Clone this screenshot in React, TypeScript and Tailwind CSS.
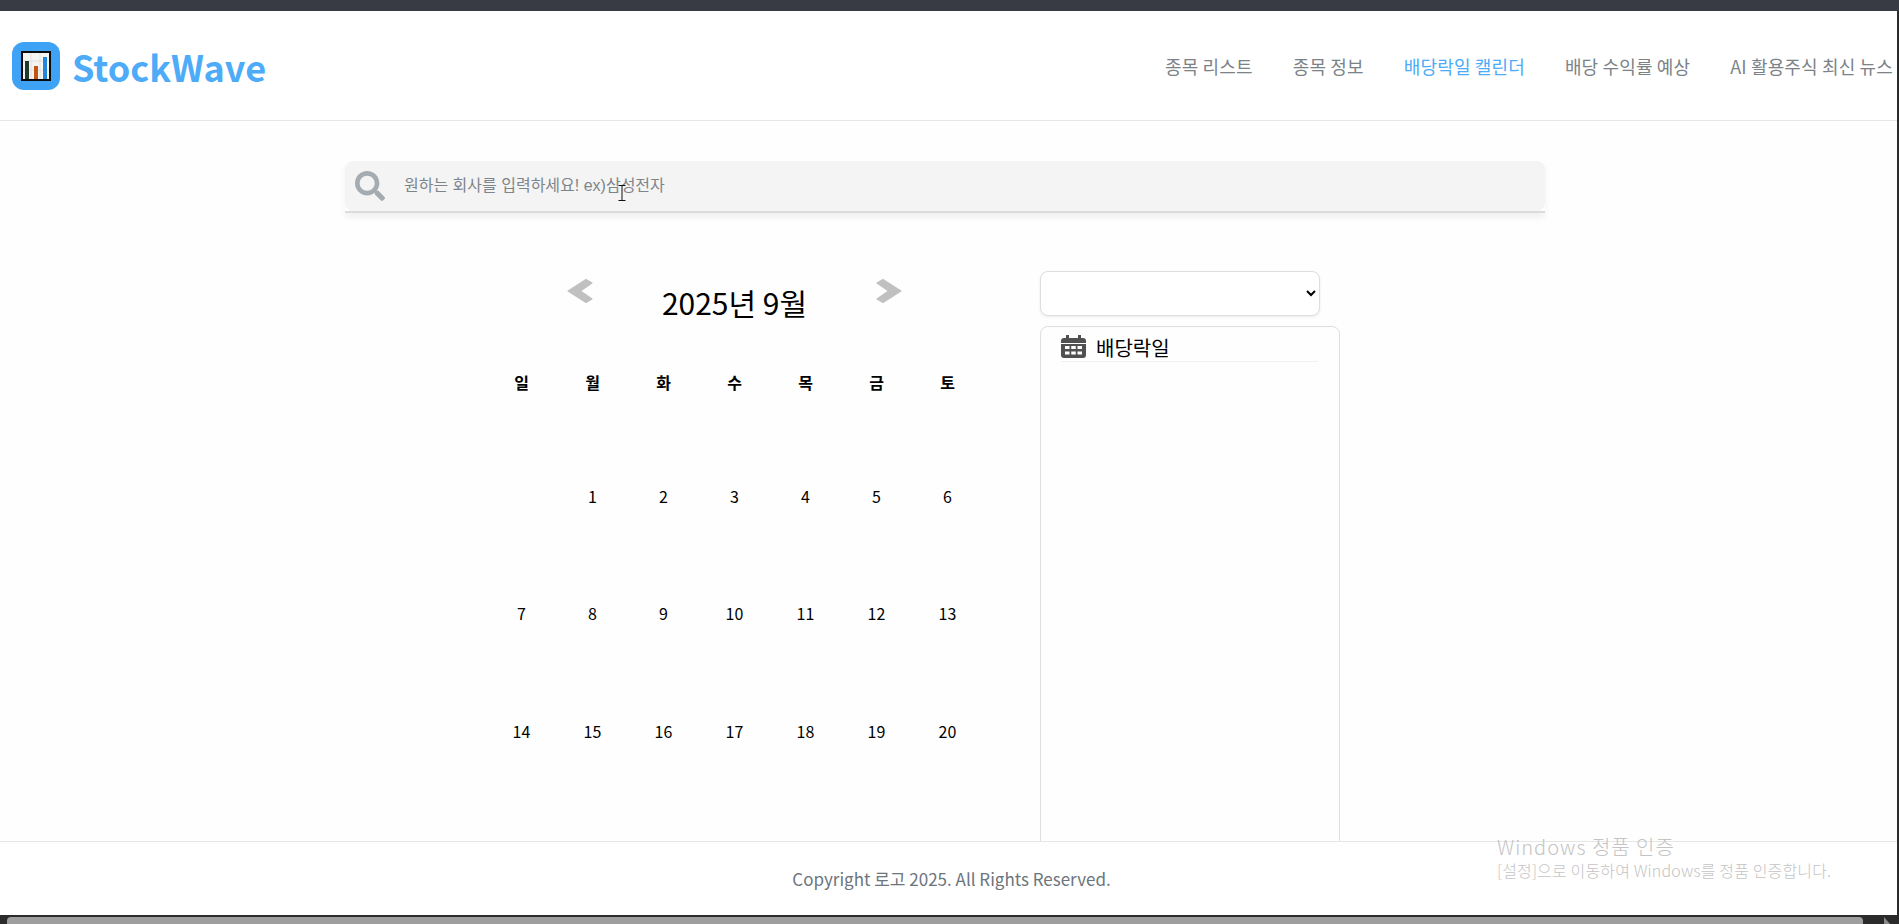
import React from 'react';
import { FaSearch } from 'react-icons/fa';

const navItems = ['종목 리스트', '종목 정보', '배당락일 캘린더', '배당 수익률 예상', 'AI 활용주식 최신 뉴스'];
const weekdays = ['일', '월', '화', '수', '목', '금', '토'];
const days: (number | null)[] = [null, ...Array.from({ length: 20 }, (_, i) => i + 1)];

function Logo() {
  return (
    <div className="w-12 h-12 rounded-xl bg-[#3fa3f5] flex items-center justify-center">
      <svg width="30" height="30" viewBox="0 0 30 30">
        <rect x="0" y="0" width="30" height="30" fill="#0b0b0b" />
        <rect x="2" y="2" width="26" height="26" fill="#f4f4f2" />
        <path d="M2 10H28M2 19H28M10 2V28M19 2V28" stroke="#e0e0e0" strokeWidth="1" />
        <rect x="4" y="10" width="4" height="18" fill="#1f3b2a" />
        <rect x="13" y="15" width="4" height="13" fill="#c2540f" />
        <rect x="22" y="6" width="4" height="22" fill="#2385dc" />
      </svg>
    </div>
  );
}

function Arrow({ flip }: { flip?: boolean }) {
  return (
    <svg width="26" height="26" viewBox="0 0 26 26" className={flip ? 'rotate-180' : ''}>
      <polygon
        points="1,13 19,1.5 25,5 13.5,13 25,21 19,24.5"
        fill="#c0c0c0"
        stroke="#c0c0c0"
        strokeWidth="1.2"
        strokeLinejoin="round"
      />
    </svg>
  );
}

function CalendarIcon() {
  return (
    <svg width="25" height="23" viewBox="0 0 25 23" className="shrink-0 -mt-[2px]">
      <path d="M5 0H8V3H17V0H20V3H22Q25 3 25 6V8H0V6Q0 3 3 3H5Z" fill="#505050" />
      <path d="M0 9H25V20Q25 23 22 23H3Q0 23 0 20Z" fill="#505050" />
      <path d="M4 11H8.5V14H4ZM10.25 11H14.75V14H10.25ZM16.5 11H21V14H16.5ZM4 16.5H8.5V19.5H4ZM10.25 16.5H14.75V19.5H10.25ZM16.5 16.5H21V19.5H16.5Z" fill="#ffffff" />
    </svg>
  );
}

export default function App() {
  return (
    <div className="h-screen flex flex-col overflow-hidden bg-white font-['Noto_Sans_CJK_KR','Noto_Sans',sans-serif] relative">
      <div className="h-[11px] shrink-0 bg-[#383a44]" />

      <div className="flex-1 min-h-0 flex">
        <div className="flex-1 min-w-0 flex flex-col bg-[#fefefe]">
          <header className="h-[110px] shrink-0 border-b border-[#e6e6e6] flex items-center justify-between pl-3 pr-1 bg-white">
            <div className="flex items-center gap-3">
              <Logo />
              <span className="text-[36px] leading-none font-semibold text-[#4dabf7]">StockWave</span>
            </div>
            <nav className="flex gap-10 text-lg tracking-[0.15px] text-[#7b8388]">
              {navItems.map((item) => (
                <a key={item} className={item === '배당락일 캘린더' ? 'text-[#4dabf7]' : ''}>
                  {item}
                </a>
              ))}
            </nav>
          </header>

          <main className="flex-1 min-h-0 overflow-hidden">
            <div className="ml-[345px] mt-10 w-[1200px] border-b-2 border-[#dcdcdc] shadow-[0_5px_6px_rgba(0,0,0,0.05)]">
              <div className="h-[50px] flex items-center gap-[19px] pl-[10px] bg-[#f4f4f4] rounded-lg">
                <FaSearch className="w-[30px] h-[30px] text-[#a5acb1]" />
                <span className="font-['Liberation_Sans','Noto_Sans_CJK_KR',sans-serif] text-base text-[#7d858b]">원하는 회사를 입력하세요! ex)삼성전자</span>
              </div>
            </div>

            <div className="flex ml-[486px] mt-[58px]">
              <section className="w-[497px] shrink-0">
                <div className="mx-auto w-[335px] pt-[7px] flex justify-between items-start">
                  <Arrow />
                  <h2 className="pt-[3px] text-[30px] leading-[42px] text-black font-normal">2025년 9월</h2>
                  <Arrow flip />
                </div>
                <div className="grid grid-cols-7 text-center text-black mt-[49px]">
                  {weekdays.map((d) => (
                    <div key={d} className="h-[20px] leading-[20px] text-base font-bold">
                      {d}
                    </div>
                  ))}
                </div>
                <div className="grid grid-cols-7 auto-rows-[117.5px] text-center text-black text-base mt-[45px]">
                  {days.map((d, i) => (
                    <div key={i} className="flex items-center justify-center">
                      {d}
                    </div>
                  ))}
                </div>
              </section>

              <aside className="ml-[57px] w-[300px] shrink-0">
                <select className="block w-[280px] h-[45px] bg-white rounded-lg border border-[#dedede] shadow-[0_1px_3px_rgba(0,0,0,0.08)] px-1" />
                <div className="mt-[10px] h-[620px] rounded-lg border border-[#dedede] pl-[20px] pr-[21px] pt-[7px]">
                  <div className="flex items-center gap-[10px] h-[28px] border-b border-[#f0f0f0] text-black">
                    <CalendarIcon />
                    <span className="text-[20px] leading-none">배당락일</span>
                  </div>
                </div>
              </aside>
            </div>
          </main>

          <footer className="h-[74px] shrink-0 border-t border-[#e6e6e6] bg-white flex items-center justify-center pl-[6px] text-[17px] text-[#6c757d]">
            Copyright 로고 2025. All Rights Reserved.
          </footer>
        </div>
        <div className="w-[2px] shrink-0 bg-[#2b2b2b]" />
      </div>

      <div className="h-[9px] shrink-0 bg-[#2b2b2b] flex items-end relative">
        <div className="ml-[7px] w-[1856px] h-[7px] bg-[#9e9e9e] rounded-t-sm" />
        <svg width="6" height="7" viewBox="0 0 6 7" className="absolute right-[9px] bottom-0">
          <path d="M0 0L6 7H0Z" fill="#8a8a8a" />
        </svg>
      </div>

      {/* windows activation watermark */}
      <div className="absolute left-[1497px] top-[834px] font-light text-[#c4c4c4] pointer-events-none">
        <div className="text-[20px] leading-[26px] tracking-[1px]">Windows 정품 인증</div>
        <div className="text-base leading-[20px] tracking-[0.15px]">[설정]으로 이동하여 Windows를 정품 인증합니다.</div>
      </div>

      {/* text cursor over the search box */}
      <svg width="8" height="16" viewBox="0 0 8 16" className="absolute left-[618px] top-[185px]">
        <path d="M0.5 0.5H7.5M4 0.5V15.5M0.5 15.5H7.5" stroke="#111" strokeWidth="1" fill="none" />
      </svg>
    </div>
  );
}
